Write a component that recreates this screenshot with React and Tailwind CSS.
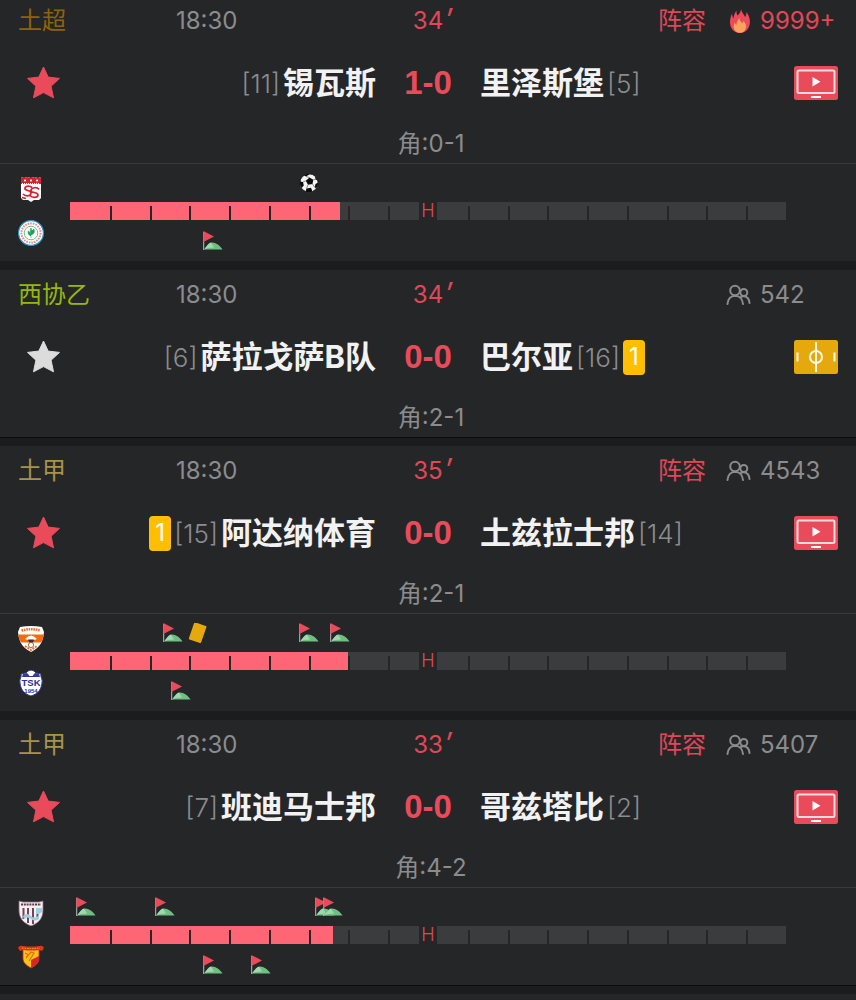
const matches = [
  {
    id: 1,
    league: '土超',
    leagueColor: 'text-[#8f6208]',
    time: '18:30',
    minute: 34,
    lineup: true,
    hot: true,
    viewers: '9999+',
    starred: true,
    home: { name: '锡瓦斯', rank: 11, logo: SivasLogo },
    away: { name: '里泽斯堡', rank: 5, logo: RizeLogo },
    score: '1-0',
    corners: '0-1',
    media: 'tv',
    homeEvents: [{ type: 'goal', minute: 30 }],
    awayEvents: [{ type: 'corner', minute: 18 }],
  },
  {
    id: 2,
    league: '西协乙',
    leagueColor: 'text-[#94b80b]',
    time: '18:30',
    minute: 34,
    viewers: '542',
    home: { name: '萨拉戈萨B队', rank: 6 },
    away: { name: '巴尔亚', rank: 16, yellow: 1 },
    score: '0-0',
    corners: '2-1',
    media: 'pitch',
  },
  {
    id: 3,
    league: '土甲',
    leagueColor: 'text-[#a8934a]',
    time: '18:30',
    minute: 35,
    lineup: true,
    viewers: '4543',
    starred: true,
    home: { name: '阿达纳体育', rank: 15, yellow: 1, logo: AdanaLogo },
    away: { name: '土兹拉士邦', rank: 14, logo: TuzlaLogo },
    score: '0-0',
    corners: '2-1',
    media: 'tv',
    homeEvents: [
      { type: 'corner', minute: 13 },
      { type: 'card', minute: 16 },
      { type: 'corner', minute: 30 },
      { type: 'corner', minute: 34 },
    ],
    awayEvents: [{ type: 'corner', minute: 14 }],
  },
  {
    id: 4,
    league: '土甲',
    leagueColor: 'text-[#a8934a]',
    time: '18:30',
    minute: 33,
    lineup: true,
    viewers: '5407',
    starred: true,
    home: { name: '班迪马士邦', rank: 7, logo: BandirmaLogo },
    away: { name: '哥兹塔比', rank: 2, logo: GoztepeLogo },
    score: '0-0',
    corners: '4-2',
    media: 'tv',
    homeEvents: [
      { type: 'corner', minute: 2 },
      { type: 'corner', minute: 12 },
      { type: 'corner', minute: 32 },
      { type: 'corner', minute: 33 },
    ],
    awayEvents: [
      { type: 'corner', minute: 18 },
      { type: 'corner', minute: 24 },
    ],
  },
]

const TICKS = [1, 2, 3, 4, 5, 6, 7, 8, 10, 11, 12, 13, 14, 15, 16, 17]

const percent = (minute) => `${(minute / 90) * 100}%`

function SivasLogo() {
  return (
    <svg viewBox="0 0 26 26" className="size-[26px]" aria-hidden="true">
      <path d="M3 1l3 1 3.500-1L13 2l3.500-1L20 2l3-1v21l-2 2h-5l-3 2-3-2H5l-2-2z" fill="#fff" />
      <path d="M3 1l3 1 3.500-1L13 2l3.500-1L20 2l3-1v7H3z" fill="#d9202e" />
      <path d="M7 3.500v2M6 4.500h2M13 3.500v2M12 4.500h2M19 3.500v2M18 4.500h2" stroke="#fff" strokeWidth="1.200" />
      <path d="M4 7.500h18" stroke="#fff" strokeWidth="1" strokeDasharray="1 1" />
      <path d="M14 11.500c-3-2.500-8-1-7 1.500 1 2 6 1 6 4s-5 4-8 1M21 13.500c-2-3-8-2-8 1 0 3 7 1 7 4.500 0 3-6 3-8 .5M4 21.500l4 1" fill="none" stroke="#d9202e" strokeWidth="1.700" />
    </svg>
  )
}

function RizeLogo() {
  return (
    <svg viewBox="0 0 26 26" className="size-[26px]" aria-hidden="true">
      <circle cx="13" cy="13" r="12.400" fill="#fff" stroke="#2c9bd3" strokeWidth="1.200" />
      <circle cx="13" cy="13" r="9.600" fill="none" stroke="#ef8c83" strokeWidth="2" strokeDasharray="1.600 1" />
      <circle cx="13" cy="13" r="6.800" fill="#fff" stroke="#41b375" strokeWidth="0.800" />
      <path d="M13 18v-5M13 16c-3-1-3-3-3-5 2 1 3 2 3 4M13 15c0-3 0-4 3-6 1 3 0 5-3 6M13 13c-1-2-1-3 0-5 1 2 1 3 0 5" fill="#239b55" stroke="#239b55" strokeWidth="0.500" />
    </svg>
  )
}

function AdanaLogo() {
  return (
    <svg viewBox="0 0 26 26" className="size-[26px]" aria-hidden="true">
      <path d="M2 1Q13-1 24 1l2 5c-1 9-3 15-13 20C3 21 1 15 0 6z" fill="#fff" />
      <path d="M3.500 4.500Q13 2 22.500 4.500" fill="none" stroke="#f0702a" strokeWidth="2.600" strokeDasharray="1.600 0.800" />
      <path d="M0 8.500h26q-1 5-3 8H3Q1 13 0 8.500z" fill="#f26a10" />
      <path d="M7 13q6-7 12 0l-3 1h-6z" fill="#fff" />
      <path d="M10 13.500h6l-1 3h-4z" fill="#333" />
      <circle cx="13" cy="19" r="2.600" fill="#fff" stroke="#8a4b2a" strokeWidth="0.800" />
      <path d="M7 20l6 4 6-4" fill="none" stroke="#f0702a" strokeWidth="2" strokeDasharray="2 1" />
    </svg>
  )
}

function TuzlaLogo() {
  return (
    <svg viewBox="0 0 26 26" className="size-[26px]" aria-hidden="true">
      <path d="M3 4l5-1 2-2 3-1 3 1 2 2 5 1c-1 3 2 5 1 9-1 8-5 11-11 13C7 24 3 21 2 13 1 9 4 7 3 4z" fill="#fff" stroke="#353c96" strokeWidth="1" />
      <path d="M5 4l4-1 3 3h2l3-3 4 1 1 3H4z" fill="#353c96" />
      <circle cx="13" cy="3.500" r="2.500" fill="#fff" />
      <text x="13" y="15.500" textAnchor="middle" fontSize="9.500" fontWeight="700" fill="#2a3190" fontFamily="Liberation Sans, sans-serif">TSK</text>
      <text x="13" y="22.500" textAnchor="middle" fontSize="6" fontWeight="700" fill="#2a3190" fontFamily="Liberation Sans, sans-serif">1954</text>
    </svg>
  )
}

function BandirmaLogo() {
  return (
    <svg viewBox="0 0 26 26" className="size-[26px]" aria-hidden="true">
      <path d="M1 1l4 1h16l4-1v9c0 8-4 13-12 16C5 23 1 18 1 10z" fill="#f2f0f2" />
      <path d="M3 4.500h20" stroke="#5e3b49" strokeWidth="2.200" strokeDasharray="2 0.800" />
      <path d="M5.500 8v11M10 8v15M15 8v16M19.500 8v11" stroke="#7a4354" strokeWidth="2" />
      <path d="M5 16q4-4 8 0t8-1v4q-4 3-8 0t-7 0z" fill="#9dcfe2" />
      <path d="M18 8h6v4l-3 2h-3z" fill="#9dcfe2" />
      <path d="M1 1l4 1h16l4-1v9c0 8-4 13-12 16C5 23 1 18 1 10z" fill="none" stroke="#8d6a76" strokeWidth="0.800" />
    </svg>
  )
}

function GoztepeLogo() {
  return (
    <svg viewBox="0 0 26 26" className="size-[26px]" aria-hidden="true">
      <path d="M5 5h16v9c0 5-3 7-8 10-5-3-8-5-8-10z" fill="#fbc312" />
      <path d="M21 12v2c0 5-3 7-8 10v-8z" fill="#d9252a" />
      <path d="M8 14l5-6 3 1-5 8M7 9l4 2" stroke="#e2681c" strokeWidth="1.200" fill="none" />
      <path d="M5 5h16v9c0 5-3 7-8 10-5-3-8-5-8-10z" fill="none" stroke="#d9252a" strokeWidth="0.800" />
      <path d="M0 4q1-3 5-2 8 1 16 0 4-1 5 2l-2 3-3-1q-8 1-16 0L2 7z" fill="#d9351f" />
      <path d="M4 4q9 1 18 0" fill="none" stroke="#f6a81c" strokeWidth="1" strokeDasharray="1.500 1" />
    </svg>
  )
}

function StarIcon({ className }) {
  return (
    <svg viewBox="0 0 34 34" className={className} aria-hidden="true">
      <path
        d="M17.500 1l4.700 10.100 11.300 1.300-8.400 7.800 2.400 11.600-10-5.200-10 5.200 2.400-11.600-8.400-7.800 11.300-1.300z"
        fill="currentColor"
        stroke="currentColor"
        strokeWidth="1"
        strokeLinejoin="round"
      />
    </svg>
  )
}

function FlameIcon() {
  return (
    <svg viewBox="0 0 26 26" className="size-[26px]" aria-hidden="true">
      <path d="M15 1c.5 3.500 3 5 4 8 1-1.300 1.500-3 1.400-5 3 4 4.600 9 2.800 14-1.500 4.500-5 7-9.200 7s-8-2.500-9.500-7C3.200 13.500 4.500 9 6 5.500c.2 2 .6 3.500 1.500 5C8 7.500 8.500 5 10.500 2.500c-.2 2 .3 3.500 1 5C13.500 6 14.800 4 15 1z" fill="#e94b5b" />
      <path d="M13.500 10c-.3 2.500 2 3.500 2.500 5.500.8-.8 1.200-1.500 1.300-2.700 2 1.700 3.200 4 2.700 6.700-.6 3.500-3 5.200-6 5.200s-5.700-1.700-6.200-5c-.3-2 .2-3.700 1-5.200.3 1.200.8 2 1.500 2.700.2-2.700 1.200-5 3.200-7.200z" fill="#f9a35c" />
    </svg>
  )
}

function ViewersIcon() {
  return (
    <svg viewBox="0 0 26 22" className="h-[22px] w-[26px]" fill="none" stroke="currentColor" strokeWidth="2" strokeLinecap="round" aria-hidden="true">
      <circle cx="9" cy="6.500" r="4.800" />
      <path d="M1.500 20c.3-4.500 3-8 7.500-8.300 4.600 0 7.600 3.600 8 8.300" />
      <circle cx="17.800" cy="8.500" r="3.500" />
      <path d="M14 13.500c1.500-1.200 2.500-1.500 4-1.300 3.200.3 5.200 3 5.500 6.800" />
    </svg>
  )
}

function TvIcon() {
  return (
    <svg viewBox="0 0 44 34" className="h-[34px] w-11" aria-hidden="true">
      <rect width="44" height="34" rx="2.500" fill="#e94b5b" />
      <rect x="3.500" y="4.500" width="37" height="22.500" rx="1.500" fill="none" stroke="#fbdde0" strokeWidth="2" />
      <path d="M18.500 11v9.500l8-4.750z" fill="#fff" />
      <path d="M17 31h10" stroke="#fff" strokeWidth="2" />
    </svg>
  )
}

function PitchIcon() {
  return (
    <svg viewBox="0 0 44 34" className="h-[34px] w-11" aria-hidden="true">
      <rect width="44" height="34" rx="2.500" fill="#e5a90e" />
      <g fill="none" stroke="#fff8e5" strokeWidth="2">
        <path d="M22 2v30M3.500 12.500v9M40.500 12.500v9" />
        <circle cx="22" cy="17" r="6" />
      </g>
    </svg>
  )
}

function CornerFlag() {
  return (
    <svg viewBox="0 0 20 19" className="h-[19px] w-5" aria-hidden="true">
      <path d="M1 18.500c2-2 4-7 8-7s8 3 10.500 7z" fill="#6fbe82" />
      <path d="M1 18.500c2-2 4-6 7-7l3 5-6 .5z" fill="#a3d8ae" />
      <path d="M.7 1v18" stroke="#b9bdbf" strokeWidth="1" />
      <path d="M.4 0v11L11 5.500z" fill="#e94b5b" />
    </svg>
  )
}

function GoalBall() {
  return (
    <svg viewBox="0 0 20 20" className="size-5" aria-hidden="true">
      <circle cx="10" cy="10" r="9.200" fill="#f4f4f4" stroke="#0c0c0c" strokeWidth="0.800" />
      <path d="M10.500 4.500l3.800 2.300-.8 4.200-4.500.8-2.200-4z" fill="#0c0c0c" />
      <path d="M5 2.300C7 1 9 .7 11 1L7 3.500zM16 3l3 4.500-2.500-1zM.8 8.500L4 9l.8 3.500L2.500 15Q.7 12 .8 8.500zM19.200 9.500l-2.700 1.500-.8 3.300 1.300 1Q19.200 13 19.200 9.500zM7.500 15.500l4.500-.8 1.500 3.700Q10 20 6.500 18.500z" fill="#0c0c0c" />
      <path d="M7 3.500l3.500 1M14.300 6.800l2.200-.3M4 9l2.800-1.200M9 11.800l-1.500 3.700M13.500 11l2.200 3.300" stroke="#444" strokeWidth="0.600" />
    </svg>
  )
}

function BookingCard() {
  return (
    <svg viewBox="0 0 20 22" className="h-[22px] w-5" aria-hidden="true">
      <rect x="4" y="0.500" width="13" height="18" rx="1" fill="#e5a90e" transform="rotate(19 10 10)" />
    </svg>
  )
}

function EventIcon({ type }) {
  if (type === 'goal') return <GoalBall />
  if (type === 'card') return <BookingCard />
  return <CornerFlag />
}

function EventRow({ events, className }) {
  return (
    <div className={`relative ${className}`}>
      {events.map((event) => (
        <span
          key={event.minute}
          className="absolute top-[9px] -ml-[10px]"
          style={{ left: percent(event.minute) }}
        >
          <EventIcon type={event.type} />
        </span>
      ))}
    </div>
  )
}

function Timeline({ match }) {
  const HomeLogo = match.home.logo
  const AwayLogo = match.away.logo

  return (
    <div className="grid grid-cols-[70px_1fr_70px] border-t border-[#38393b]">
      <div className="flex flex-col gap-[18px] pt-3 pl-[18px]">
        <HomeLogo />
        <AwayLogo />
      </div>
      <div>
        <EventRow events={match.homeEvents} className="h-[38px]" />
        <div className="relative flex h-[18px] text-[#e04857]">
          <div className="flex-1 bg-[#3b3c3e]" />
          <div className="w-[18px] text-center text-lg leading-[18px] font-light">H</div>
          <div className="flex-1 bg-[#3b3c3e]" />
          <div
            className="absolute inset-y-0 left-0 bg-[#ff6675]"
            style={{ width: percent(match.minute) }}
          />
          {TICKS.map((tick) => (
            <span
              key={tick}
              className="absolute top-1 bottom-0 w-0.5 bg-[#252628]"
              style={{ left: percent(tick * 5) }}
            />
          ))}
        </div>
        <EventRow events={match.awayEvents} className="mt-0.5 h-[39px]" />
      </div>
    </div>
  )
}

function YellowCount({ count }) {
  return (
    <span className="flex h-[35px] w-[22px] items-center justify-center rounded bg-[#ffbf00] text-2xl text-white">
      {count}
    </span>
  )
}

function Rank({ value }) {
  return <span className="text-[26px] font-light text-[#8b8c8e]">[{value}]</span>
}

function MatchCard({ match }) {
  const { home, away } = match

  return (
    <article className="bg-[#252628]">
      <div className="grid h-[50px] grid-cols-[1fr_auto_1fr] items-center px-[18px] text-2xl text-[#8b8c8e]">
        <div className="flex">
          <span className={`w-[158px] ${match.leagueColor}`}>{match.league}</span>
          <time>{match.time}</time>
        </div>
        <div className="relative text-[#e04857]">
          {match.minute}
          <span className="absolute bottom-0 left-full pl-0.5 text-3xl italic">′</span>
        </div>
        <div className="flex items-center justify-end">
          {match.lineup && (
            <a href="#lineup" className="mr-5 text-[#e04857]">阵容</a>
          )}
          {match.hot ? <FlameIcon /> : <ViewersIcon />}
          <span className={`ml-2 w-[78px] ${match.hot ? 'text-[#e04857]' : ''}`}>{match.viewers}</span>
        </div>
      </div>

      <div className="grid h-[74px] grid-cols-[1fr_104px_1fr] items-center px-[18px]">
        <div className="flex items-center justify-between">
          <button
            aria-label="收藏"
            className={`ml-2 ${match.starred ? 'text-[#e94b5b]' : 'text-[#dcdcdd]'}`}
          >
            <StarIcon className="size-[34px]" />
          </button>
          <div className="flex items-center gap-[3px]">
            {home.yellow && <YellowCount count={home.yellow} />}
            <Rank value={home.rank} />
            <h2 className="text-[31px] font-bold text-[#f2f2f3]">{home.name}</h2>
          </div>
        </div>
        <strong className="text-center font-['Liberation_Sans',sans-serif] text-[33px] font-bold text-[#e94b5b]">
          {match.score}
        </strong>
        <div className="flex items-center justify-between">
          <div className="flex items-center gap-[3px]">
            <h2 className="text-[31px] font-bold text-[#f2f2f3]">{away.name}</h2>
            <Rank value={away.rank} />
            {away.yellow && <YellowCount count={away.yellow} />}
          </div>
          <button aria-label={match.media === 'tv' ? '视频直播' : '动画直播'}>
            {match.media === 'tv' ? <TvIcon /> : <PitchIcon />}
          </button>
        </div>
      </div>

      <p className="pt-2 pb-[3px] pl-1.5 text-center text-2xl leading-8 text-[#8b8c8e]">
        角:{match.corners}
      </p>

      {match.homeEvents && <Timeline match={match} />}
    </article>
  )
}

export default function App() {
  return (
    <div className="min-h-screen overflow-hidden bg-[#252628] font-['Inter','Noto_Sans_CJK_SC',sans-serif]">
      <main className="-mt-1">
        {matches.map((match) => (
          <div key={match.id}>
            <MatchCard match={match} />
            <div className={`h-[9px] bg-[#1b1c1e] ${match.id % 2 === 0 ? 'border-t border-[#0b0c0d]' : ''}`} />
          </div>
        ))}
      </main>
    </div>
  )
}
